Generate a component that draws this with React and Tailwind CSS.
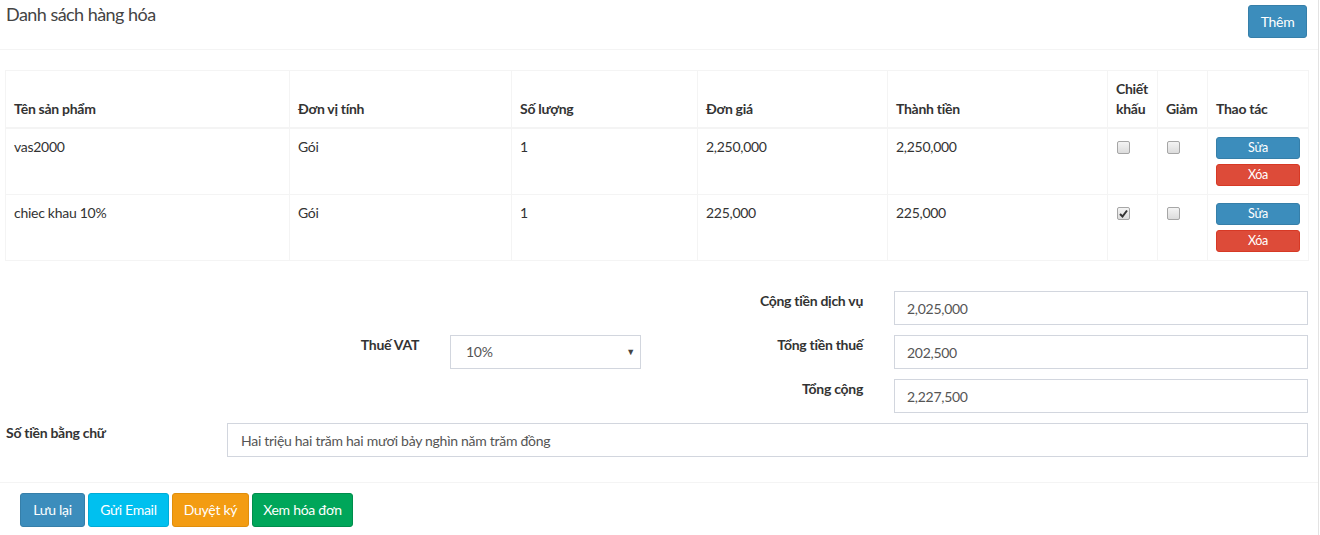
const rows = [
  { name: 'vas2000', unit: 'Gói', qty: '1', price: '2,250,000', total: '2,250,000', discount: false, reduce: false },
  { name: 'chiec khau 10%', unit: 'Gói', qty: '1', price: '225,000', total: '225,000', discount: true, reduce: false },
];

function Check({ checked }) {
  return (
    <span className="mt-[4px] ml-px flex h-[13px] w-[13px] items-center justify-center rounded-[2px] border border-[#a6a6a6] bg-gradient-to-b from-[#f4f4f4] to-[#dcdcdc]">
      {checked && (
        <svg width="9" height="9" viewBox="0 0 9 9">
          <path d="M1 5 L3.5 7.5 L8 1.5" fill="none" stroke="#333" strokeWidth="2" />
        </svg>
      )}
    </span>
  );
}

export default function App() {
  const font = { fontFamily: 'Lato, "Liberation Sans", sans-serif' };
  const th = 'border border-[#f4f4f4] border-b-2 px-2 pt-2 pb-2 text-left align-bottom font-bold';
  const td = 'border border-[#f4f4f4] p-2 align-top';
  const input = 'h-[34px] border border-[#d2d6de] px-3 text-[#555] outline-none tracking-[-0.02em]';

  return (
    <div className="h-[535px] w-[1320px] bg-white text-[14px] leading-5 tracking-[-0.02em] text-[#333]" style={font}>
      <div className="h-full w-[1319px] border-r border-[#e3e3e3]">
        {/* Header */}
        <div className="flex h-[50px] items-start justify-between border-b border-[#f4f4f4] pl-[6px] pr-[11px]">
          <h3 className="pt-[3px] text-[18px] leading-[22px] tracking-[-0.03em] text-[#444]">Danh sách hàng hóa</h3>
          <button className="mt-[5px] h-[33px] w-[59px] rounded-[3px] border border-[#367fa9] bg-[#3c8dbc] text-white">
            Thêm
          </button>
        </div>

        {/* Table */}
        <div className="mx-[5px] mt-[20px] w-[1303px]">
          <table className="w-full table-fixed border-collapse border border-[#f4f4f4]">
            <colgroup>
              <col className="w-[284px]" />
              <col className="w-[222px]" />
              <col className="w-[186px]" />
              <col className="w-[190px]" />
              <col className="w-[220px]" />
              <col className="w-[50px]" />
              <col className="w-[50px]" />
              <col className="w-[101px]" />
            </colgroup>
            <thead>
              <tr>
                <th className={th}>Tên sản phẩm</th>
                <th className={th}>Đơn vị tính</th>
                <th className={th}>Số lượng</th>
                <th className={th}>Đơn giá</th>
                <th className={th}>Thành tiền</th>
                <th className={th}>Chiết khấu</th>
                <th className={th}>Giảm</th>
                <th className={th}>Thao tác</th>
              </tr>
            </thead>
            <tbody>
              {rows.map((r) => (
                <tr key={r.name}>
                  <td className={td}>{r.name}</td>
                  <td className={td}>{r.unit}</td>
                  <td className={td}>{r.qty}</td>
                  <td className={td}>{r.price}</td>
                  <td className={td}>{r.total}</td>
                  <td className={td}>
                    <Check checked={r.discount} />
                  </td>
                  <td className={td}>
                    <Check checked={r.reduce} />
                  </td>
                  <td className={td}>
                    <div className="flex flex-col gap-[5px]">
                      <button className="h-[22px] w-full rounded-[3px] border border-[#367fa9] bg-[#3c8dbc] text-[12.5px] leading-4 text-white">
                        Sửa
                      </button>
                      <button className="h-[22px] w-full rounded-[3px] border border-[#d73925] bg-[#dd4b39] text-[12.5px] leading-4 text-white">
                        Xóa
                      </button>
                    </div>
                  </td>
                </tr>
              ))}
            </tbody>
          </table>
        </div>

        {/* Totals */}
        <div className="mt-[30px] flex flex-col gap-[10px]">
          <div className="flex">
            <label className="w-[863px] text-right font-bold">Cộng tiền dịch vụ</label>
            <input readOnly value="2,025,000" className={`ml-[31px] w-[414px] ${input}`} />
          </div>
          <div className="flex">
            <label className="w-[419px] text-right font-bold">Thuế VAT</label>
            <div className="ml-[31px] flex h-[34px] w-[191px] items-center justify-between border border-[#d2d6de] pl-[15px] pr-[5px] text-[#555]">
              <span>10%</span>
              <span className="text-[9px] text-[#444]">▼</span>
            </div>
            <label className="w-[222px] text-right font-bold">Tổng tiền thuế</label>
            <input readOnly value="202,500" className={`ml-[31px] w-[414px] ${input}`} />
          </div>
          <div className="flex">
            <label className="w-[863px] text-right font-bold">Tổng cộng</label>
            <input readOnly value="2,227,500" className={`ml-[31px] w-[414px] ${input}`} />
          </div>
          <div className="flex">
            <label className="w-[227px] pl-[6px] font-bold">Số tiền bằng chữ</label>
            <input
              readOnly
              value="Hai triệu hai trăm hai mươi bảy nghìn năm trăm đồng"
              className={`w-[1081px] px-[13px] ${input}`}
            />
          </div>
        </div>

        {/* Footer */}
        <div className="mt-[25px] flex gap-[3px] border-t border-[#f4f4f4] pl-[20px] pt-[10px]">
          <button className="h-[34px] w-[65px] rounded-[3px] border border-[#367fa9] bg-[#3c8dbc] text-white">Lưu lại</button>
          <button className="h-[34px] w-[81px] rounded-[3px] border border-[#00acd6] bg-[#00c0ef] text-white">Gửi Email</button>
          <button className="h-[34px] w-[77px] rounded-[3px] border border-[#e08e0b] bg-[#f39c12] text-white">Duyệt ký</button>
          <button className="h-[34px] w-[101px] rounded-[3px] border border-[#008d4c] bg-[#00a65a] text-white">Xem hóa đơn</button>
        </div>
      </div>
    </div>
  );
}
